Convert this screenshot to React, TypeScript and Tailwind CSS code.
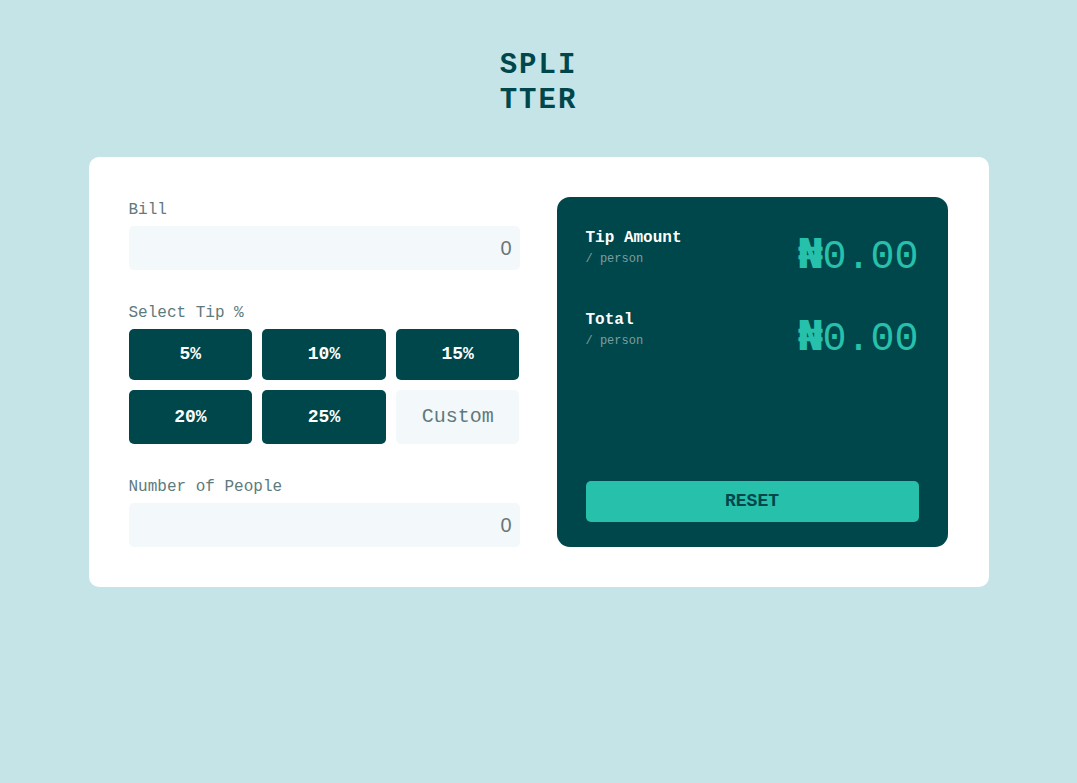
import React from "react";

function Label({ children }: { children: React.ReactNode }) {
  return (
    <div className="mb-[7px] font-['Courier_New','Liberation_Mono',monospace] text-[16px] leading-[18px] text-[#5e7a7d]">
      {children}
    </div>
  );
}

function Field() {
  return (
    <div className="flex h-[44px] items-center justify-end rounded-[5px] bg-[#f3f8fb] pr-[8px] font-['Liberation_Sans',Arial,sans-serif] text-[20px] text-[#6b7675]">
      0
    </div>
  );
}

function Result({ title, className }: { title: string; className?: string }) {
  return (
    <div className={"flex items-start justify-between " + (className || "")}>
      <div>
        <div className="font-['Courier_New','Liberation_Mono',monospace] text-[16px] font-bold leading-[18px] text-white">
          {title}
        </div>
        <div className="mt-[4px] font-['Courier_New','Liberation_Mono',monospace] text-[12px] leading-[16px] text-[#7f9d9f]">
          / person
        </div>
      </div>
      <div className="mt-[3px] font-['Courier_New','Liberation_Mono',monospace] text-[40px] leading-[44px] text-[#26c0ab]">
        <span className="font-['DejaVu_Sans_Mono',monospace] font-bold">₦</span>0.00
      </div>
    </div>
  );
}

export default function App() {
  const tips = ["5%", "10%", "15%"];
  const tips2 = ["20%", "25%"];
  return (
    <div className="flex min-h-[783px] w-full flex-col items-center bg-[#c5e4e7] pt-[48px]">
      <h1 className="font-['Courier_New','Liberation_Mono',monospace] text-[29px] font-bold leading-[35px] tracking-[2px] text-[#00474b]">
        SPLI
        <br />
        TTER
      </h1>
      <div className="mt-[39px] flex w-[900px] gap-[37px] rounded-[10px] bg-white p-[40px]">
        <div className="w-[391px] pt-[4px]">
          <Label>Bill</Label>
          <Field />
          <div className="mt-[34px]">
            <Label>Select Tip %</Label>
            <div className="grid grid-cols-3 gap-[10px]">
              {tips.map((t) => (
                <div
                  key={t}
                  className="flex h-[51px] items-center justify-center rounded-[5px] bg-[#00474b] font-['Courier_New','Liberation_Mono',monospace] text-[18px] font-bold text-white"
                >
                  {t}
                </div>
              ))}
              {tips2.map((t) => (
                <div
                  key={t}
                  className="flex h-[54px] items-center justify-center rounded-[5px] bg-[#00474b] font-['Courier_New','Liberation_Mono',monospace] text-[18px] font-bold text-white"
                >
                  {t}
                </div>
              ))}
              <div className="flex h-[54px] items-center justify-center rounded-[5px] bg-[#f3f8fb] font-['Courier_New','Liberation_Mono',monospace] text-[20px] text-[#5e7a7d]">
                Custom
              </div>
            </div>
          </div>
          <div className="mt-[34px]">
            <Label>Number of People</Label>
            <Field />
          </div>
        </div>
        <div className="flex h-[350px] w-[391px] flex-col rounded-[13px] bg-[#00474b] px-[29px] pb-[25px] pt-[32px]">
          <Result title="Tip Amount" />
          <Result title="Total" className="mt-[31px]" />
          <div className="mt-auto flex h-[41px] items-center justify-center rounded-[5px] bg-[#26c0ab] font-['Courier_New','Liberation_Mono',monospace] text-[18px] font-bold text-[#00474b]">
            RESET
          </div>
        </div>
      </div>
    </div>
  );
}
